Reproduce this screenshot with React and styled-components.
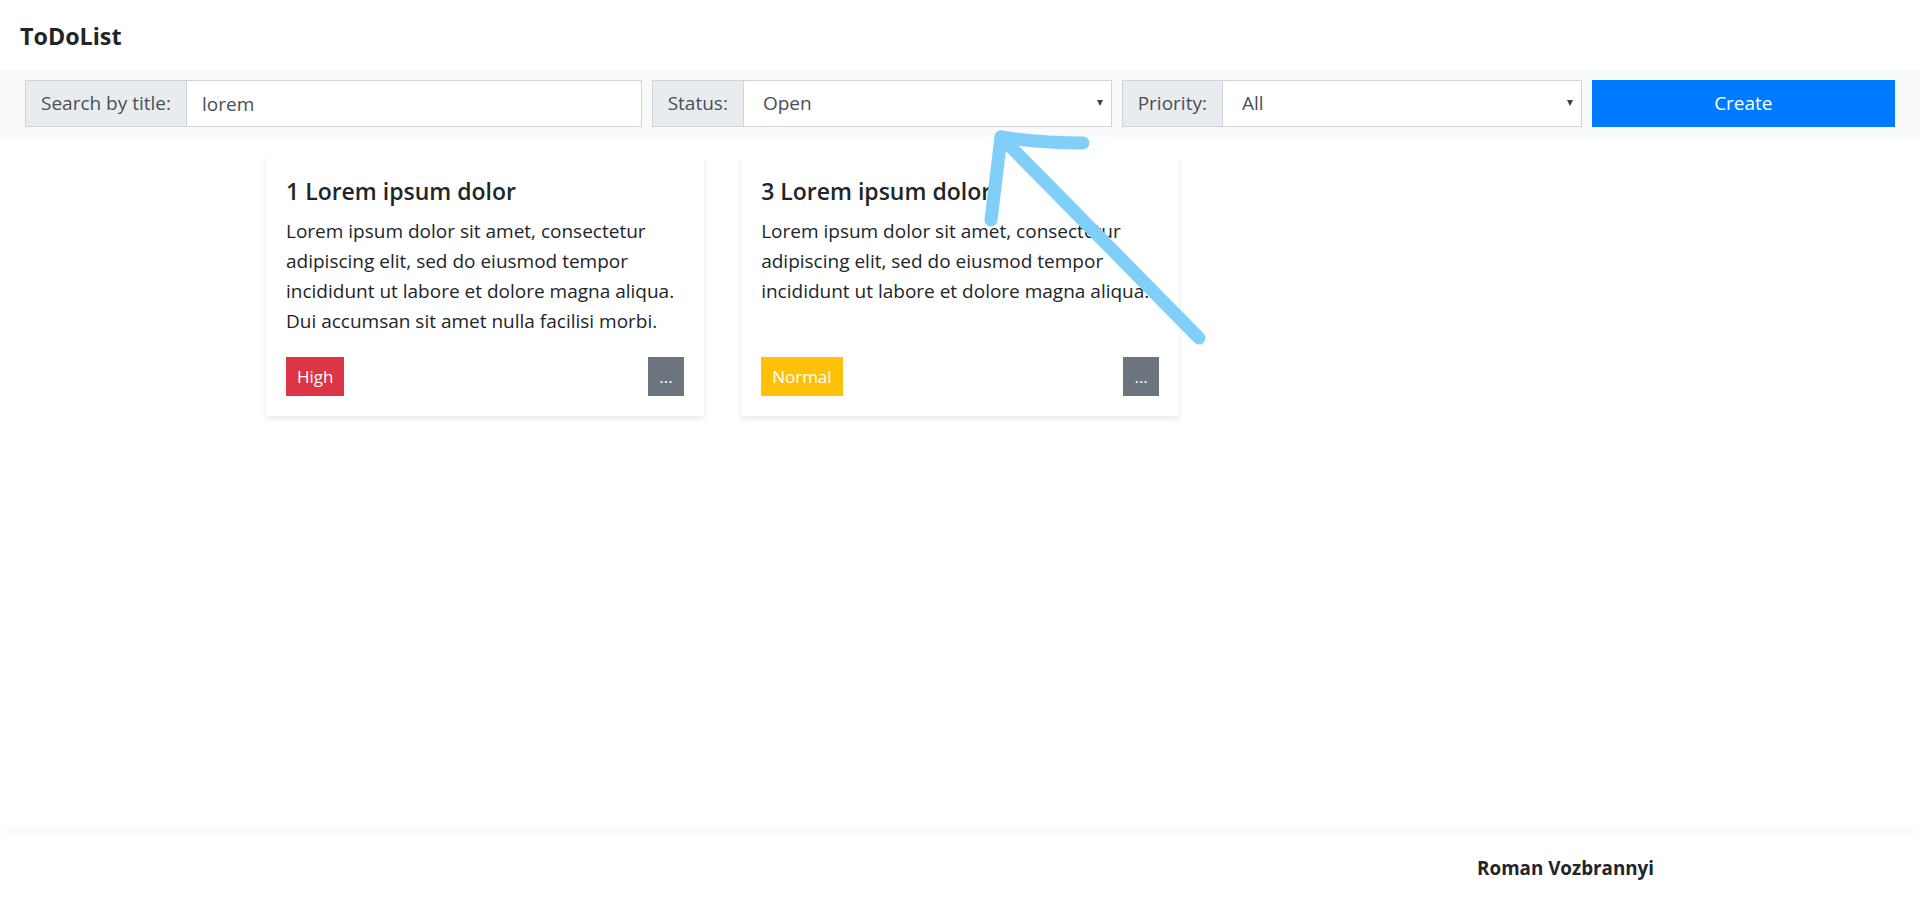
import React from 'react';
import styled, { createGlobalStyle } from 'styled-components';

const GlobalStyle = createGlobalStyle`
    * {
        box-sizing: border-box;
    }

    body {
        margin: 0;
        font-family: "Open Sans", "Noto Sans", sans-serif;
        font-size: 19px;
        line-height: 1.5;
        color: #212529;
        background: #fff;
    }
`;

const PageStyled = styled.div`
    position: relative;
    min-height: 100vh;
    display: flex;
    flex-direction: column;
`;

const NavbarStyled = styled.header`
    height: 70px;
    padding: 0 20px;
    display: flex;
    align-items: center;
`;

const BrandStyled = styled.a`
    font-size: 23.3px;
    font-weight: 700;
    color: #212529;
    text-decoration: none;
    padding-top: 2px;
`;

const FilterBarStyled = styled.section`
    background: #f8f9fa;
    padding: 10px 20px;
    display: grid;
    grid-template-columns: 4fr 3fr 3fr 2fr;
`;

const FilterCellStyled = styled.div`
    padding: 0 5px;
`;

const InputGroupStyled = styled.div`
    display: flex;
    height: 47px;
`;

const GroupLabelStyled = styled.label`
    display: flex;
    align-items: center;
    padding: 0 15px;
    background: #e9ecef;
    border: 1px solid #ced4da;
    color: #495057;
    white-space: nowrap;
`;

const TextInputStyled = styled.input`
    flex: 1;
    min-width: 0;
    height: 100%;
    padding: 0 15px;
    border: 1px solid #ced4da;
    border-left: 0;
    font: inherit;
    color: #495057;
    background: #fff;
    outline: none;
`;

const SelectWrapStyled = styled.div`
    position: relative;
    flex: 1;
    min-width: 0;

    &::after {
        content: '';
        position: absolute;
        right: 9px;
        top: 20px;
        border-left: 3.5px solid transparent;
        border-right: 3.5px solid transparent;
        border-top: 6px solid #404040;
        pointer-events: none;
    }
`;

const SelectStyled = styled.select`
    width: 100%;
    height: 100%;
    padding: 0 30px 0 19px;
    border: 1px solid #ced4da;
    border-left: 0;
    border-radius: 0;
    font: inherit;
    color: #495057;
    background: #fff;
    appearance: none;
    outline: none;
`;

const CreateButtonStyled = styled.button`
    width: 100%;
    height: 47px;
    border: 1px solid #007bff;
    background: #007bff;
    color: #fff;
    font: inherit;
    cursor: pointer;
`;

const MainStyled = styled.main`
    flex: 1;
`;

const ContainerStyled = styled.div`
    max-width: 1388px;
    margin: 0 auto;
`;

const CardsRowStyled = styled.div`
    display: grid;
    grid-template-columns: repeat(3, 1fr);
    column-gap: 37.5px;
    padding-top: 20px;
`;

const CardStyled = styled.article`
    display: flex;
    flex-direction: column;
    min-height: 259px;
    padding: 20px;
    background: #fff;
    box-shadow: 0 2.5px 6px rgba(0, 0, 0, 0.09);
`;

const CardTitleStyled = styled.h5`
    margin: 0 0 10px;
    font-size: 23px;
    font-weight: 600;
    line-height: 1.25;
`;

const CardTextStyled = styled.p`
    margin: 0;
    line-height: 30px;
`;

const CardFooterStyled = styled.div`
    margin-top: auto;
    padding-top: 20px;
    display: flex;
    justify-content: space-between;
    align-items: flex-end;
`;

const SmallButtonStyled = styled.button`
    height: 39px;
    padding: 0 10px;
    border: 1px solid ${props => props.$color};
    background: ${props => props.$color};
    color: #fff;
    font-family: inherit;
    font-size: 17px;
    line-height: 26px;
    cursor: pointer;
`;

const FooterStyled = styled.footer`
    height: 67px;
    padding-top: 21px;
    background: #fff;
    box-shadow: 0 -3px 10px rgba(0, 0, 0, 0.035);
`;

const FooterTextStyled = styled.div`
    text-align: right;
    font-size: 18.8px;
    font-weight: 700;
`;

const ArrowStyled = styled.svg`
    position: absolute;
    top: 0;
    left: 0;
    pointer-events: none;
`;

const priorityColors = {
    High: '#dc3545',
    Normal: '#ffc107',
};

const todos = [
    {
        id: 1,
        title: '1 Lorem ipsum dolor',
        text: 'Lorem ipsum dolor sit amet, consectetur adipiscing elit, sed do eiusmod tempor incididunt ut labore et dolore magna aliqua. Dui accumsan sit amet nulla facilisi morbi.',
        priority: 'High',
    },
    {
        id: 3,
        title: '3 Lorem ipsum dolor',
        text: 'Lorem ipsum dolor sit amet, consectetur adipiscing elit, sed do eiusmod tempor incididunt ut labore et dolore magna aliqua.',
        priority: 'Normal',
    },
];

function TodoCard({ todo }) {
    return (
        <CardStyled>
            <CardTitleStyled>{todo.title}</CardTitleStyled>
            <CardTextStyled>{todo.text}</CardTextStyled>
            <CardFooterStyled>
                <SmallButtonStyled $color={priorityColors[todo.priority]}>{todo.priority}</SmallButtonStyled>
                <SmallButtonStyled $color="#6c757d">...</SmallButtonStyled>
            </CardFooterStyled>
        </CardStyled>
    );
}

function App() {
    return (
        <PageStyled>
            <GlobalStyle />

            <NavbarStyled>
                <BrandStyled href="#">ToDoList</BrandStyled>
            </NavbarStyled>

            <FilterBarStyled>
                <FilterCellStyled>
                    <InputGroupStyled>
                        <GroupLabelStyled>Search by title:</GroupLabelStyled>
                        <TextInputStyled defaultValue="lorem" />
                    </InputGroupStyled>
                </FilterCellStyled>

                <FilterCellStyled>
                    <InputGroupStyled>
                        <GroupLabelStyled>Status:</GroupLabelStyled>
                        <SelectWrapStyled>
                            <SelectStyled defaultValue="open">
                                <option value="all">All</option>
                                <option value="open">Open</option>
                                <option value="done">Done</option>
                            </SelectStyled>
                        </SelectWrapStyled>
                    </InputGroupStyled>
                </FilterCellStyled>

                <FilterCellStyled>
                    <InputGroupStyled>
                        <GroupLabelStyled>Priority:</GroupLabelStyled>
                        <SelectWrapStyled>
                            <SelectStyled defaultValue="all">
                                <option value="all">All</option>
                                <option value="high">High</option>
                                <option value="normal">Normal</option>
                                <option value="low">Low</option>
                            </SelectStyled>
                        </SelectWrapStyled>
                    </InputGroupStyled>
                </FilterCellStyled>

                <FilterCellStyled>
                    <CreateButtonStyled>Create</CreateButtonStyled>
                </FilterCellStyled>
            </FilterBarStyled>

            <MainStyled>
                <ContainerStyled>
                    <CardsRowStyled>
                        {todos.map(todo => (
                            <TodoCard key={todo.id} todo={todo} />
                        ))}
                    </CardsRowStyled>
                </ContainerStyled>
            </MainStyled>

            <FooterStyled>
                <ContainerStyled>
                    <FooterTextStyled>Roman Vozbrannyi</FooterTextStyled>
                </ContainerStyled>
            </FooterStyled>

            {/* hand-drawn annotation arrow */}
            <ArrowStyled width="1920" height="900" viewBox="0 0 1920 900">
                <g fill="none" stroke="#7fcff9" strokeWidth="13" strokeLinecap="round" strokeLinejoin="round">
                    <path d="M1199 338 L1003 139" />
                    <path d="M1001 137 Q996 178 991 220" />
                    <path d="M1001 137 Q1040 143 1083 143" />
                </g>
            </ArrowStyled>
        </PageStyled>
    );
}

export default App;
